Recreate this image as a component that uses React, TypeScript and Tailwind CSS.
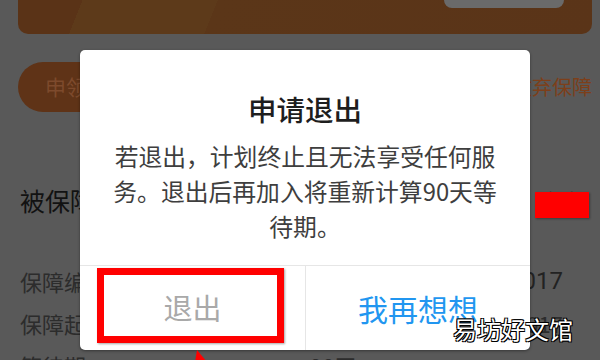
import React from "react";

const font = { fontFamily: '"Noto Sans CJK SC", "Noto Sans", sans-serif' };

export default function App() {
  return (
    <div
      className="relative w-[600px] h-[360px] overflow-hidden bg-[#595959]"
      style={font}
    >
      {/* dimmed page behind the dialog */}
      <div className="flex flex-col">
        <div className="ml-[18px] w-[574px] h-[34px] rounded-b-[10px] bg-[linear-gradient(112deg,#5a3317_0%,#5a3317_11%,#5d3a1a_11%,#5d3a1a_34%,#5b3618_34%,#5a3418_100%)] flex justify-end pr-[28px]">
          <div className="w-[120px] h-[8px] rounded-b-[8px] bg-[#6a6a6a]" />
        </div>
        <div className="mt-[28px] flex items-center justify-between pl-[18px] pr-[8px]">
          <div className="h-[50px] w-[220px] rounded-full bg-[#5f3317] flex items-center pl-[27px] text-[21px] text-[#7d4a2c]">
            申领服务
          </div>
          <div className="text-[20px] leading-none text-[#7d3f1a]">放弃保障</div>
        </div>
        <div className="mt-[73px] flex items-center justify-between pl-[20px] pr-[12px]">
          <div className="text-[25px] leading-[30px] text-[#121212]">被保障人</div>
          <div className="text-[22px] leading-[30px] text-[#1a1a1a]">保额</div>
        </div>
        <div className="mt-[55px] flex flex-col gap-[20px] pl-[20px] pr-[37px] text-[22px] leading-[22px] text-[#2c2c2c]">
          <div className="flex justify-between">
            <span>保障编号</span>
            <span className="text-[24px] text-[#222]" style={{ fontFamily: 'Roboto, "Noto Sans", sans-serif' }}>
              20171017
            </span>
          </div>
          <div className="flex justify-between">
            <span>保障起期</span>
            <span>2017</span>
          </div>
          <div className="flex">
            <span className="w-[290px]">等待期</span>
            <span>90天</span>
          </div>
        </div>
      </div>

      {/* dialog */}
      <div className="absolute left-[80px] top-[50px] w-[450px] h-[300px] rounded-[5px] bg-white shadow-[0_1px_3px_rgba(0,0,0,0.4)] flex flex-col">
        <div className="pt-[42px] text-center text-[28.5px] leading-[34px] font-medium text-[#1e1e1e]">
          申请退出
        </div>
        <div className="mt-[12px] flex-1 flex flex-col items-center text-[23.8px] leading-[35px] text-[#3e3e3e]">
          <div>若退出，计划终止且无法享受任何服</div>
          <div>务。退出后再加入将重新计算90天等</div>
          <div>待期。</div>
        </div>
        <div className="h-[85px] border-t border-[#e6e6e6] grid grid-cols-2">
          <div className="flex items-center justify-center text-[29px] text-[#a9a9a9]">
            退出
          </div>
          <div className="flex items-center justify-center border-l border-[#e6e6e6] text-[30px] text-[#2196f0]">
            我再想想
          </div>
        </div>
      </div>

      {/* annotations */}
      <div className="absolute left-[97px] top-[268px] w-[187px] h-[75px] border-[7px] border-[#ff0000] shadow-[1px_1px_2px_rgba(0,0,0,0.35)]" />
      <div className="absolute left-[535px] top-[192px] w-[54px] h-[26px] bg-[#ff0000] shadow-[1px_1px_2px_rgba(0,0,0,0.35)]" />
      <svg className="absolute left-[193px] top-[350px]" width="20" height="12" viewBox="0 0 20 12">
        <polygon points="4,0 14,12 2,12" fill="#ff0000" />
      </svg>

      {/* watermark */}
      <div className="absolute left-[453px] top-[313px] text-[24px] leading-[32px] text-white [text-shadow:-1px_-1px_0_#000,1px_-1px_0_#000,-1px_1px_0_#000,1px_1px_0_#000]">
        易坊好文馆
      </div>
    </div>
  );
}
